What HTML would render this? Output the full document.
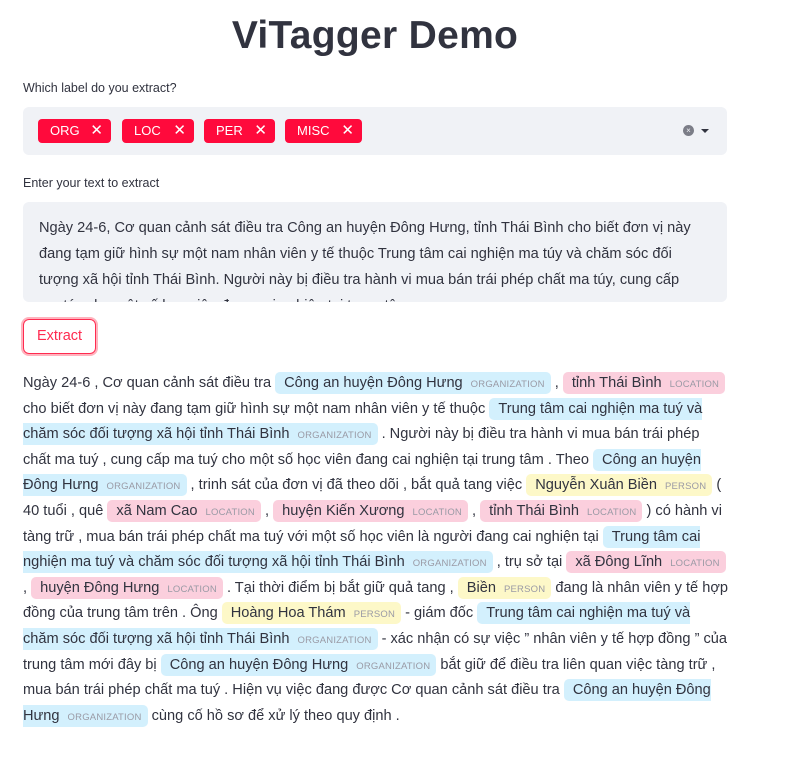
<!DOCTYPE html>
<html><head><meta charset="utf-8"><style>
*{margin:0;padding:0;box-sizing:border-box}
body{width:793px;height:782px;background:#fff;font-family:"Liberation Sans",sans-serif;color:#31333f;position:relative;overflow:hidden}
h1{position:absolute;left:0;width:750px;top:14px;text-align:center;font-size:39px;font-weight:bold;letter-spacing:0.3px}
.lbl{position:absolute;left:23px;font-size:12.5px}
.sel{position:absolute;left:23px;top:107px;width:704px;height:48px;background:#f0f2f6;border-radius:6px}
.tag{position:absolute;top:12px;height:24px;background:#ff0a3c;color:#fff;border-radius:4px;font-size:13px;line-height:24px;padding-left:12px}
.tag b{position:absolute;right:8px;top:0;font-weight:normal;font-size:15px}
.ta{position:absolute;left:23px;top:202px;width:704px;height:100px;background:#f0f2f6;border-radius:6px;overflow:hidden;padding:13px 16px;font-size:14.6px;line-height:26px;white-space:nowrap}
.btn{position:absolute;left:23px;top:319px;width:73px;height:35px;border:1.5px solid #ff2b50;border-radius:6px;box-shadow:0 0 0 2px #ffb3be;color:#ff2b50;font-size:14.5px;text-align:center;line-height:33px}
.out{position:absolute;left:23px;top:371px;font-size:14.6px;line-height:25.6px;white-space:nowrap}
.out div{height:25.6px}
.e{padding:3px 6px 3px 9px;border-radius:5px}
.o{background:#d3f0fd}.l{background:#fbcfdd}.p{background:#fdf8c8}
.e i{font-style:normal;font-size:9.5px;color:#9a9aa5;margin-left:8px;letter-spacing:0.2px}
.rc{padding-right:0;border-radius:5px 0 0 5px}
.lc{padding-left:0;border-radius:0 5px 5px 0}
</style></head><body>
<h1>ViTagger Demo</h1>
<div class="lbl" style="top:81px">Which label do you extract?</div>
<div class="sel">
<div class="tag" style="left:15px;width:73px">ORG<b>✕</b></div>
<div class="tag" style="left:99px;width:72px">LOC<b>✕</b></div>
<div class="tag" style="left:181px;width:71px">PER<b>✕</b></div>
<div class="tag" style="left:262px;width:77px">MISC<b>✕</b></div>
<div style="position:absolute;left:660px;top:18px;width:11px;height:11px;border-radius:50%;background:#7b7d87;color:#f0f2f6;font-size:8px;line-height:11px;text-align:center">×</div>
<div style="position:absolute;left:678px;top:22px;width:0;height:0;border-left:4px solid transparent;border-right:4px solid transparent;border-top:4px solid #31333f"></div>
</div>
<div class="lbl" style="top:176px">Enter your text to extract</div>
<div class="ta">Ngày 24-6, Cơ quan cảnh sát điều tra Công an huyện Đông Hưng, tỉnh Thái Bình cho biết đơn vị này<br>đang tạm giữ hình sự một nam nhân viên y tế thuộc Trung tâm cai nghiện ma túy và chăm sóc đối<br>tượng xã hội tỉnh Thái Bình. Người này bị điều tra hành vi mua bán trái phép chất ma túy, cung cấp<br>ma túy cho một số học viên đang cai nghiện tại trung tâm.</div>
<div class="btn">Extract</div>
<div class="out">
<div>Ngày 24-6 , Cơ quan cảnh sát điều tra <span class="e o">Công an huyện Đông Hưng<i>ORGANIZATION</i></span> , <span class="e l">tỉnh Thái Bình<i>LOCATION</i></span></div>
<div>cho biết đơn vị này đang tạm giữ hình sự một nam nhân viên y tế thuộc <span class="e o rc">Trung tâm cai nghiện ma tuý và</span></div>
<div><span class="e o lc">chăm sóc đối tượng xã hội tỉnh Thái Bình<i>ORGANIZATION</i></span> . Người này bị điều tra hành vi mua bán trái phép</div>
<div>chất ma tuý , cung cấp ma tuý cho một số học viên đang cai nghiện tại trung tâm . Theo <span class="e o rc">Công an huyện</span></div>
<div><span class="e o lc">Đông Hưng<i>ORGANIZATION</i></span> , trinh sát của đơn vị đã theo dõi , bắt quả tang việc <span class="e p">Nguyễn Xuân Biền<i>PERSON</i></span> (</div>
<div>40 tuổi , quê <span class="e l">xã Nam Cao<i>LOCATION</i></span> , <span class="e l">huyện Kiến Xương<i>LOCATION</i></span> , <span class="e l">tỉnh Thái Bình<i>LOCATION</i></span> ) có hành vi</div>
<div>tàng trữ , mua bán trái phép chất ma tuý với một số học viên là người đang cai nghiện tại <span class="e o rc">Trung tâm cai</span></div>
<div><span class="e o lc">nghiện ma tuý và chăm sóc đối tượng xã hội tỉnh Thái Bình<i>ORGANIZATION</i></span> , trụ sở tại <span class="e l">xã Đông Lĩnh<i>LOCATION</i></span></div>
<div>, <span class="e l">huyện Đông Hưng<i>LOCATION</i></span> . Tại thời điểm bị bắt giữ quả tang , <span class="e p">Biền<i>PERSON</i></span> đang là nhân viên y tế hợp</div>
<div>đồng của trung tâm trên . Ông <span class="e p">Hoàng Hoa Thám<i>PERSON</i></span> - giám đốc <span class="e o rc">Trung tâm cai nghiện ma tuý và</span></div>
<div><span class="e o lc">chăm sóc đối tượng xã hội tỉnh Thái Bình<i>ORGANIZATION</i></span> - xác nhận có sự việc ” nhân viên y tế hợp đồng ” của</div>
<div>trung tâm mới đây bị <span class="e o">Công an huyện Đông Hưng<i>ORGANIZATION</i></span> bắt giữ để điều tra liên quan việc tàng trữ ,</div>
<div>mua bán trái phép chất ma tuý . Hiện vụ việc đang được Cơ quan cảnh sát điều tra <span class="e o rc">Công an huyện Đông</span></div>
<div><span class="e o lc">Hưng<i>ORGANIZATION</i></span> cùng cố hồ sơ để xử lý theo quy định .</div>
</div>
</body></html>
